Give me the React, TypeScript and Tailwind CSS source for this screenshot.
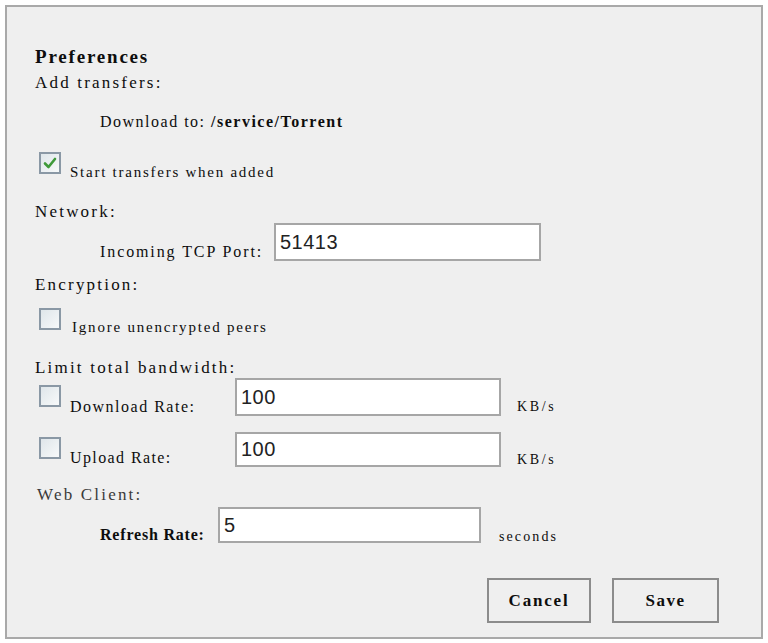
import React, { useState } from "react";

// Small square checkbox with a green tick when checked
const Box: React.FC<{ checked: boolean; onToggle: () => void; className?: string }> = ({
  checked,
  onToggle,
  className = "",
}) => (
  <div
    onClick={onToggle}
    className={`w-[22px] h-[22px] shrink-0 border-2 border-[#8a98a5] bg-gradient-to-br from-[#dfe6ea] to-[#f7f9fa] flex items-center justify-center cursor-pointer ${className}`}
  >
    {checked && (
      <svg width="14" height="12" viewBox="0 0 14 12">
        <path d="M2 6.5 L5.5 10 L12 2" fill="none" stroke="#3f9a3a" strokeWidth="2.6" strokeLinecap="round" strokeLinejoin="round" />
      </svg>
    )}
  </div>
);

const Field: React.FC<{ value: string; onChange: (v: string) => void; className: string }> = ({
  value,
  onChange,
  className,
}) => (
  <input
    value={value}
    onChange={(e) => onChange(e.target.value)}
    className={`shrink-0 bg-white border-2 border-[#a6a6a6] pl-[4px] font-['Liberation_Sans',sans-serif] text-[20px] tracking-[0.5px] text-[#222] outline-none ${className}`}
  />
);

const App: React.FC = () => {
  const [autoStart, setAutoStart] = useState(true);
  const [encrypted, setEncrypted] = useState(false);
  const [limitDown, setLimitDown] = useState(false);
  const [limitUp, setLimitUp] = useState(false);
  const [port, setPort] = useState("51413");
  const [downRate, setDownRate] = useState("100");
  const [upRate, setUpRate] = useState("100");
  const [refresh, setRefresh] = useState("5");

  const section = "leading-none text-[17px] tracking-[2.2px]";

  return (
    <div className="min-h-screen bg-white pt-[5px] pl-[5px]">
      <div className="w-[758px] h-[634px] border-2 border-[#a9a9a9] bg-[#efefef] flex flex-col pl-[28px] font-['Liberation_Serif',serif] text-[#0d0d0d]">
        {/* Title */}
        <div className="mt-[40px] leading-none text-[19px] font-bold tracking-[1.8px]">Preferences</div>

        {/* Add transfers */}
        <div className={`mt-[8px] ${section}`}>Add transfers:</div>
        <div className="mt-[23px] ml-[65px] leading-none text-[16px] tracking-[1.5px]">
          Download to: <span className="font-bold">/service/Torrent</span>
        </div>
        <div className="mt-[22px] h-[26px] flex items-start">
          <Box checked={autoStart} onToggle={() => setAutoStart(!autoStart)} className="ml-[4px]" />
          <span className="ml-[9px] mt-[13px] leading-none text-[15px] tracking-[1.75px]">Start transfers when added</span>
        </div>

        {/* Network */}
        <div className={`mt-[25px] ${section}`}>Network:</div>
        <div className="mt-[3px] ml-[65px] flex items-start">
          <span className="w-[174px] mt-[21px] leading-none text-[16px] tracking-[1.9px]">Incoming TCP Port:</span>
          <Field value={port} onChange={setPort} className="w-[267px] h-[38px]" />
        </div>

        {/* Encryption */}
        <div className={`mt-[15px] ${section}`}>Encryption:</div>
        <div className="mt-[15px] h-[26px] flex items-start">
          <Box checked={encrypted} onToggle={() => setEncrypted(!encrypted)} className="ml-[4px]" />
          <span className="ml-[11px] mt-[12px] leading-none text-[15px] tracking-[1.8px]">Ignore unencrypted peers</span>
        </div>

        {/* Bandwidth */}
        <div className={`mt-[25px] ${section}`}>Limit total bandwidth:</div>
        <div className="mt-[2px] flex items-start">
          <Box checked={limitDown} onToggle={() => setLimitDown(!limitDown)} className="ml-[4px] mt-[7px]" />
          <span className="ml-[9px] w-[165px] mt-[21px] leading-none text-[16px] tracking-[1.5px]">Download Rate:</span>
          <Field value={downRate} onChange={setDownRate} className="w-[266px] h-[38px]" />
          <span className="ml-[16px] mt-[22px] leading-none text-[14px] tracking-[2.6px]">KB/s</span>
        </div>
        <div className="mt-[16px] flex items-start">
          <Box checked={limitUp} onToggle={() => setLimitUp(!limitUp)} className="ml-[4px] mt-[5px]" />
          <span className="ml-[9px] w-[165px] mt-[18px] leading-none text-[16px] tracking-[1.4px]">Upload Rate:</span>
          <Field value={upRate} onChange={setUpRate} className="w-[266px] h-[35px]" />
          <span className="ml-[16px] mt-[21px] leading-none text-[14px] tracking-[2.6px]">KB/s</span>
        </div>

        {/* Web client */}
        <div className={`mt-[19px] ml-[2px] text-[#3a3a3a] ${section}`}>Web Client:</div>
        <div className="mt-[4px] ml-[65px] flex items-start">
          <span className="w-[118px] mt-[20px] leading-none text-[16px] font-bold tracking-[0.8px]">Refresh Rate:</span>
          <Field value={refresh} onChange={setRefresh} className="w-[263px] h-[36px]" />
          <span className="ml-[18px] mt-[23px] leading-none text-[14px] tracking-[2.1px]">seconds</span>
        </div>

        {/* Actions */}
        <div className="mt-[34px] flex justify-end gap-[21px] pr-[42px]">
          <button className="w-[104px] h-[45px] border-2 border-[#8c8c8c] bg-[#efefef] text-[17px] font-bold tracking-[1.8px]">
            Cancel
          </button>
          <button className="w-[107px] h-[45px] border-2 border-[#8c8c8c] bg-[#efefef] text-[17px] font-bold tracking-[1.5px]">
            Save
          </button>
        </div>
      </div>
    </div>
  );
};

export default App;
